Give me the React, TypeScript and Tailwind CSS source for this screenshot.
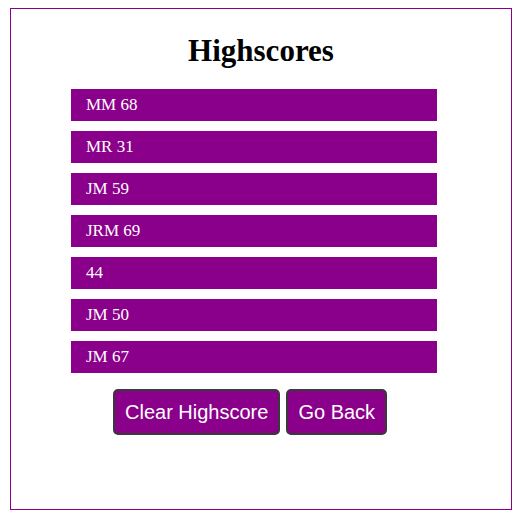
import React from 'react';

const scores = ['MM 68', 'MR 31', 'JM 59', 'JRM 69', '44', 'JM 50', 'JM 67'];

export default function App() {
  return (
    <div className="w-[525px] h-[521px] bg-white pt-[8px] pl-[10px]">
      <div className="w-[502px] h-[502px] border border-[#8b008b] flex flex-col">
        <h1 className="mt-[23px] text-center text-[31px] leading-[37px] font-bold text-black font-['Liberation_Serif',serif]">
          Highscores
        </h1>
        <ul className="mt-[20px] ml-[60px] w-[366px] flex flex-col gap-[10px]">
          {scores.map((s, i) => (
            <li
              key={i}
              className="h-[32px] bg-[#8b008b] text-white pl-[15px] flex items-center text-[17px] font-['Liberation_Serif',serif]"
            >
              {s}
            </li>
          ))}
        </ul>
        <div className="mt-[16px] ml-[102px] flex gap-[6px] font-['Liberation_Sans',Arial,sans-serif]">
          <button className="h-[46px] px-[10px] bg-[#8b008b] text-white text-[20px] rounded-[5px] border-2 border-[#3a3a3a]">
            Clear Highscore
          </button>
          <button className="h-[46px] px-[10px] bg-[#8b008b] text-white text-[20px] rounded-[5px] border-2 border-[#3a3a3a]">
            Go Back
          </button>
        </div>
      </div>
    </div>
  );
}
